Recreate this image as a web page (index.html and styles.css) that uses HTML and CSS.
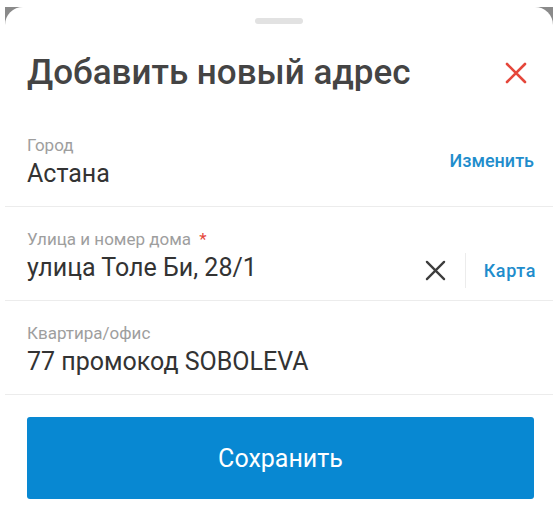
FILE: index.html
```html
<!DOCTYPE html>
<html lang="ru">
<head>
<meta charset="utf-8">
<link rel="stylesheet" href="styles.css">
</head>
<body>
<div class="frame">
  <div class="backdrop">
    <div class="sheet">
      <div class="handle"></div>
      <div class="header">
        <h1 class="title">Добавить новый адрес</h1>
        <svg class="close" viewBox="0 0 22 22" width="22" height="22"><path d="M2 2L20 20M20 2L2 20" stroke="#e5473b" stroke-width="2.6" stroke-linecap="round"/></svg>
      </div>
      <div class="row">
        <div class="field">
          <div class="label">Город</div>
          <div class="value">Астана</div>
        </div>
        <div class="link link-change">Изменить</div>
      </div>
      <div class="row">
        <div class="field">
          <div class="label">Улица и номер дома <span class="req">*</span></div>
          <div class="value">улица Толе Би, 28/1</div>
        </div>
        <div class="actions">
          <svg class="clear" viewBox="0 0 22 22" width="21" height="21"><path d="M2 2L20 20M20 2L2 20" stroke="#3d3d3d" stroke-width="2.4" stroke-linecap="round"/></svg>
          <div class="sep"></div>
          <div class="link link-map">Карта</div>
        </div>
      </div>
      <div class="row">
        <div class="field">
          <div class="label">Квартира/офис</div>
          <div class="value">77 промокод SOBOLEVA</div>
        </div>
      </div>
      <div class="footer">
        <button class="save">Сохранить</button>
      </div>
    </div>
  </div>
</div>
</body>
</html>
```

FILE: styles.css
```css
* { box-sizing: border-box; }
html, body { margin: 0; padding: 0; background: #fff; }
body { font-family: Roboto, "Noto Sans", sans-serif; }
.frame { width: 559px; height: 505px; padding: 7px 6px 0 5px; background: #fff; overflow: hidden; }
.backdrop { background: #8a8a8a; height: 100%; }
.sheet { background: #fff; height: 100%; border-radius: 18px 18px 0 0; display: flex; flex-direction: column; }
.handle { flex-shrink: 0; width: 48px; height: 6px; border-radius: 3px; background: #e2e2e2; margin: 11px auto 0; }
.header { flex-shrink: 0; display: flex; align-items: center; justify-content: space-between; padding: 28px 26px 0 22px; height: 89px; align-items: flex-start; }
.title { margin: 0; font-size: 35px; line-height: 42px; font-weight: 500; color: #444; }
.close { margin-top: 10px; }
.row { flex-shrink: 0; display: flex; align-items: flex-start; justify-content: space-between; padding: 0 19px 0 22px; border-bottom: 1px solid #ececec; height: 94px; }
.field { display: flex; flex-direction: column; gap: 5px; padding-top: 22px; }
.label { font-size: 17px; line-height: 20px; color: #9e9e9e; }
.req { color: #e5473b; margin-left: 4px; }
.value { font-size: 25px; line-height: 28px; color: #333; }
.link { font-size: 18px; line-height: 22px; color: #1f8dcc; font-weight: 500; }
.link-change { align-self: center; margin-top: 2px; }
.link-map { letter-spacing: 0.6px; margin-right: -2px; }
.actions { display: flex; align-items: center; margin-top: 46px; height: 35px; }
.clear { margin-right: 19px; }
.sep { width: 1px; height: 35px; background: #ececec; margin-right: 18px; }
.footer { flex-shrink: 0; padding: 22px 19px 0 22px; }
.save { display: block; width: 100%; height: 82px; border: 0; border-radius: 3px; background: #0888d2; color: #fff; font-family: Roboto, sans-serif; font-size: 25px; }
```
